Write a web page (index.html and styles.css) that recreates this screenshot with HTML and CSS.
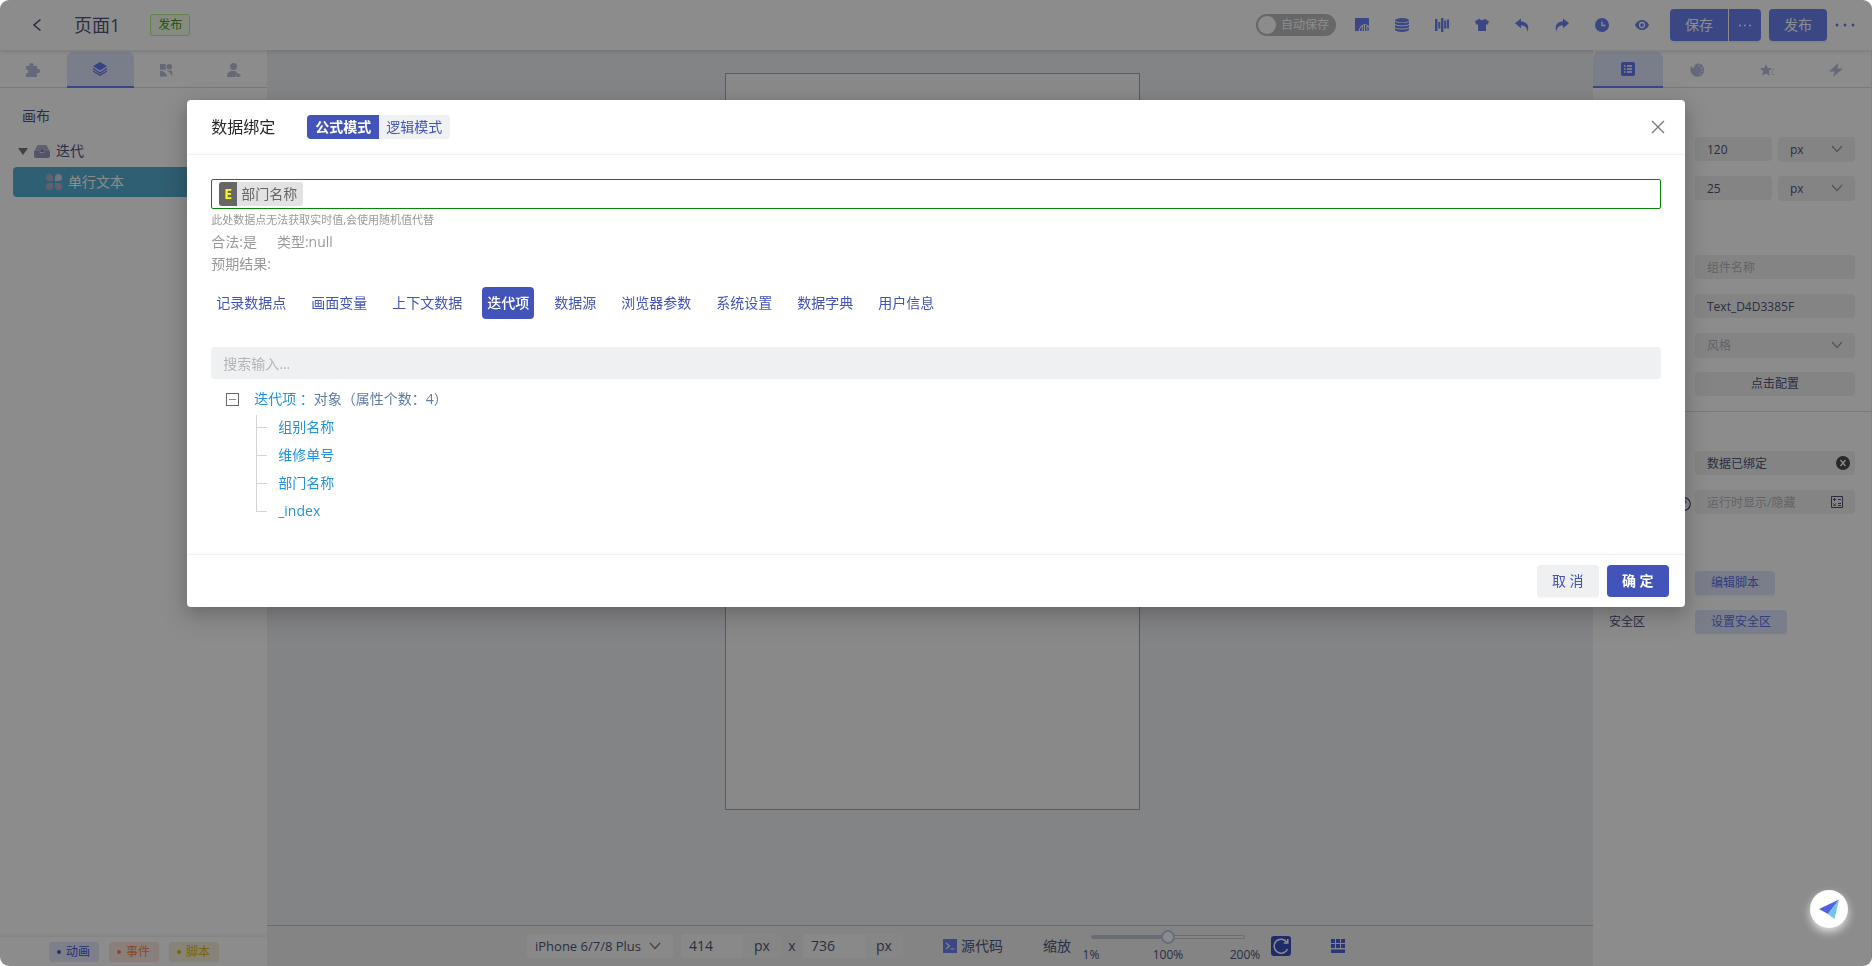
FILE: index.html
```html
<!DOCTYPE html>
<html lang="zh-CN">
<head>
<meta charset="utf-8">
<title>页面1</title>
<link rel="stylesheet" href="styles.css">
</head>
<body>
<div class="app">
  <header class="topbar">
    <button class="back" aria-label="返回"><svg width="10" height="14" viewBox="0 0 10 14"><path d="M8.500 1.500L2 7l6.500 5.500" fill="none" stroke="currentColor" stroke-width="1.600"/></svg></button>
    <h1 class="page-title">页面1</h1>
    <span class="status-tag">发布</span>
    <label class="autosave"><input type="checkbox"><span>自动保存</span></label>
    <nav class="tools">
      <button aria-label="模板"><svg viewBox="0 0 14 14"><path d="M0 0h14v8.200C10 4.500 5 6.500 3.600 13H0z"/><path d="M4.600 13C5 11 5.600 9.500 6.800 8.600V13zM7.800 13V7.800l1.200-.6V13zM10 13V7h1.400v6zM12.400 13V8.500c1 .6 1.600 1.500 1.600 2.500 0 1-.6 2-1.600 2z"/></svg></button>
      <button aria-label="数据"><svg viewBox="0 0 14 14"><ellipse cx="7" cy="2.200" rx="7" ry="2.200"/><path d="M0 3.500c2 2 12 2 14 0v2.200c-2 2-12 2-14 0zM0 6.800c2 2 12 2 14 0V9c-2 2-12 2-14 0zM0 10c2 2 12 2 14 0v1.700c-2 3-12 3-14 0z"/></svg></button>
      <button aria-label="对齐"><svg viewBox="0 0 14 14"><path d="M0 1h2.500v12H0zM3.300 4h2v6.500h-2zM6 0h2.400v14H6zM9.100 2.500h2v8h-2zM11.800 1.500H14v9h-2.200z"/></svg></button>
      <button aria-label="主题"><svg viewBox="0 0 14 14"><path d="M4.300.8c1 1.600 4.400 1.600 5.400 0L14 3.200l-1.400 3.600-1.600-.6V13H3V6.200l-1.600.6L0 3.200z"/></svg></button>
      <button aria-label="撤销"><svg viewBox="0 0 14 14"><path d="M0 5.200L6 .5v3C12 3.500 15 8 12.300 14 12.400 9.500 10 7.500 6 7.500v2.800z"/></svg></button>
      <button aria-label="重做"><svg viewBox="0 0 14 14"><path d="M14 5.200L8 .5v3C2 3.500-1 8 1.700 14 1.600 9.500 4 7.500 8 7.500v2.800z"/></svg></button>
      <button aria-label="历史"><svg viewBox="0 0 14 14"><circle cx="7" cy="7" r="7"/><path d="M7 3.500v4h3.500" class="cut"/></svg></button>
      <button aria-label="预览"><svg viewBox="0 0 14 14"><path d="M0 7c3-6.700 11-6.700 14 0-3 6.700-11 6.700-14 0z"/><circle cx="7" cy="7" r="2.500" class="cut"/></svg></button>
    </nav>
    <div class="save-group"><button class="btn-blue">保存</button><button class="btn-blue more" aria-label="更多保存"><svg width="14" height="3" viewBox="0 0 14 3"><circle cx="2" cy="1.500" r="1"/><circle cx="7" cy="1.500" r="1"/><circle cx="12" cy="1.500" r="1"/></svg></button></div>
    <button class="btn-blue publish">发布</button>
    <button class="dots" aria-label="更多"><svg width="20" height="4" viewBox="0 0 20 4"><circle cx="2" cy="2" r="1.500"/><circle cx="10" cy="2" r="1.500"/><circle cx="18" cy="2" r="1.500"/></svg></button>
  </header>

  <div class="workspace">
    <aside class="left">
      <nav class="tabs">
        <button aria-label="组件"><svg viewBox="0 0 14 14"><path d="M0 3h3.500C2.800 1 4 0 5.500 0S8 1 7.500 3H11v3c1.800-.5 3 .5 3 2s-1.200 2.500-3 2v4H0v-3.500c3 .5 3-4.500 0-4z"/></svg></button>
        <button class="active" aria-label="图层"><svg viewBox="0 0 14 14"><path d="M7 0l7 4.300L7 8.500 0 4.300z"/><path d="M0 6.500L7 11l7-4.500M0 9L7 13.300 14 9" fill="none" stroke="currentColor" stroke-width="1.300"/></svg></button>
        <button aria-label="素材"><svg viewBox="0 0 14 14"><rect x="0" y="1" width="5.700" height="5.700"/><circle cx="9.300" cy="3.800" r="2.800"/><path d="M0 7.800c4 .5 6 2.200 7.500 5.700H0zM6.500 7.800h5.700v5.700c-1-2.500-3-4.500-5.700-5.700z"/></svg></button>
        <button aria-label="用户"><svg viewBox="0 0 14 14"><circle cx="6.500" cy="3.500" r="3.500"/><path d="M0 14c0-4 2-6 5-6h3l2 2-1.500 4zM10 10l4 2-2 2H9.500z"/></svg></button>
      </nav>
      <div class="layers">
        <p class="canvas-name">画布</p>
        <div class="layer"><span class="caret"></span><svg width="16" height="14" viewBox="0 0 16 14"><path d="M3.500 1h9L16 8H0z" fill="#aeb0cf"/><path d="M0 7h5c1 3 5 3 6 0h5v5c0 1-1 2-2 2H2c-1 0-2-1-2-2z" fill="#9899bd"/><circle cx="8" cy="7" r="1.500" fill="#777aa8"/></svg><span>迭代</span></div>
        <div class="layer child"><svg width="16" height="16" viewBox="0 0 16 16"><path d="M0 3.500a3.500 3.500 0 017 0V7H3.500A3.500 3.500 0 010 3.500zM0 12.500A3.500 3.500 0 003.500 16 3.500 3.500 0 007 12.500V9H3.500A3.500 3.500 0 000 12.500zM16 12.500a3.500 3.500 0 01-7 0V9h3.500a3.500 3.500 0 013.500 3.500z" fill="#b3aed0"/><path d="M9 7V3.500A3.500 3.500 0 1112.500 7z" fill="#d8d2ec"/></svg><span>单行文本</span></div>
      </div>
      <footer class="legend"><span class="blue">动画</span><span class="orange">事件</span><span class="yellow">脚本</span></footer>
    </aside>

    <main class="center">
      <div class="stage"><div class="phone"></div></div>
      <footer class="bottombar">
        <div class="select-wrap device"><select aria-label="设备"><option>iPhone 6/7/8 Plus</option></select><svg width="12" height="8" viewBox="0 0 12 8"><path d="M1 1l5 5.500L11 1"/></svg></div>
        <label class="size"><input value="414" aria-label="宽"><span>px</span></label>
        <span class="times">x</span>
        <label class="size"><input value="736" aria-label="高"><span>px</span></label>
        <button class="source"><svg width="14" height="14" viewBox="0 0 14 14"><path d="M0 0h14v14H0z" fill="#6c82f0"/><path d="M3 4l3.500 3L3 10M7.500 10h4" fill="none" stroke="#f4f4ff" stroke-width="1.200"/></svg>源代码</button>
        <label class="zoom-label" for="zoom">缩放</label>
        <div class="zoom"><input id="zoom" type="range" min="1" max="200" value="100"><div class="marks"><span>1%</span><span>100%</span><span>200%</span></div></div>
        <button class="reset" aria-label="重置"><svg width="20" height="20" viewBox="0 0 20 20"><path d="M16 6.500A7 7 0 1016.500 13M16.800 3v4h-4" fill="none" stroke="#fff" stroke-width="1.500"/></svg></button>
        <button class="grid" aria-label="网格"><svg width="14" height="14" viewBox="0 0 14 14"><path d="M0 0h4v4H0zM5 0h4v4H5zM10 0h4v4h-4zM0 5h4v4H0zM5 5h4v4H5zM10 5h4v4h-4zM0 10.500h14V14H0z"/></svg></button>
      </footer>
    </main>

    <aside class="right">
      <nav class="tabs">
        <button class="active" aria-label="属性"><svg viewBox="0 0 14 14"><rect width="14" height="14" rx="2"/><path d="M3 4h1.500M3 7h1.500M3 10h1.500M6 4h5M6 7h5M6 10h5" class="cut"/></svg></button>
        <button aria-label="样式"><svg viewBox="0 0 14 14"><path d="M5 2c2-3 9-2 9 5s-7 8-11 5S0 4 2 3c0 3 2 3 3-1z"/><g fill="#fff"><circle cx="9" cy="2.500" r=".8"/><circle cx="11.500" cy="5" r=".8"/><circle cx="12" cy="8" r=".8"/><circle cx="10.500" cy="11" r=".8"/></g></svg></button>
        <button aria-label="事件"><svg viewBox="0 0 14 14"><path d="M6 1l1.800 4 4.400.3L8.800 8.200l1 4.500L6 10.400l-3.900 2.300 1-4.500L0 5.300 4.200 5z"/><path d="M12.500 6.500H14M11.500 9h1.500M12.500 11.500H14" stroke="currentColor"/></svg></button>
        <button aria-label="动作"><svg viewBox="0 0 14 14"><path d="M9.500 0L0 8.500h5.500L4 14l10-8.500H8.500z"/></svg></button>
      </nav>
      <div class="props">
        <section>
          <div class="row"><span class="pair"><input value="120" aria-label="宽度"><span class="select-wrap"><select aria-label="宽度单位"><option>px</option></select><svg width="12" height="8" viewBox="0 0 12 8"><path d="M1 1l5 5.500L11 1"/></svg></span></span></div>
          <div class="row"><span class="pair"><input value="25" aria-label="高度"><span class="select-wrap"><select aria-label="高度单位"><option>px</option></select><svg width="12" height="8" viewBox="0 0 12 8"><path d="M1 1l5 5.500L11 1"/></svg></span></span></div>
        </section>
        <section>
          <div class="row"><input placeholder="组件名称" aria-label="组件名称"></div>
          <div class="row"><input value="Text_D4D3385F" aria-label="组件标识"></div>
          <div class="row"><span class="select-wrap muted"><select aria-label="风格"><option>风格</option></select><svg width="12" height="8" viewBox="0 0 12 8"><path d="M1 1l5 5.500L11 1"/></svg></span></div>
          <div class="row"><button class="config">点击配置</button></div>
        </section>
        <section class="ruled">
          <div class="row"><span class="icon-field"><input value="数据已绑定" aria-label="数据"><svg class="clear" width="14" height="14" viewBox="0 0 14 14"><circle cx="7" cy="7" r="7" fill="#4a4a4a"/><path d="M4.500 4l5 6M9.500 4l-5 6" stroke="#fff" stroke-width="1.300"/></svg></span></div>
          <div class="row"><svg class="help outline" width="14" height="14" viewBox="0 0 14 14"><circle cx="7" cy="7" r="6.300" stroke-width="1.200"/><path d="M5 5c0-2.500 4-2.500 4 0 0 1.500-2 1.500-2 3M7 9.500v1"/></svg><span class="icon-field"><input placeholder="运行时显示/隐藏" aria-label="运行时显示/隐藏"><svg class="formula outline" width="12" height="12" viewBox="0 0 12 12"><path d="M.5.5h11v11H.5zM2 3.500h3M3.500 2v3M7 3.500h3M2.300 7.500l2.500 2.500M4.800 7.500L2.300 10M7 7.500h3M7 9.500h3"/></svg></span></div>
        </section>
        <section class="actions">
          <div class="row"><button class="link-btn">编辑脚本</button></div>
          <div class="row"><span class="name">安全区</span><button class="link-btn">设置安全区</button></div>
        </section>
      </div>
    </aside>
  </div>
</div>

<div class="mask">
  <div class="modal" role="dialog" aria-labelledby="modal-title">
    <header class="modal-head">
      <h2 id="modal-title">数据绑定</h2>
      <div class="modes">
        <label><input type="radio" name="mode" checked><span>公式模式</span></label>
        <label><input type="radio" name="mode"><span>逻辑模式</span></label>
      </div>
      <button class="close" aria-label="关闭"><svg width="14" height="14" viewBox="0 0 14 14"><path d="M1 1l12 12M13 1L1 13" stroke="currentColor" stroke-width="1.300"/></svg></button>
    </header>
    <div class="modal-body">
      <div class="formula-box" role="textbox" aria-label="公式"><span class="chip"><b>E</b><span>部门名称</span></span></div>
      <p class="hint">此处数据点无法获取实时值,会使用随机值代替</p>
      <p class="result"><span>合法:是</span><span>类型:null</span></p>
      <p class="result">预期结果:</p>
      <nav class="sources">
        <button>记录数据点</button><button>画面变量</button><button>上下文数据</button><button class="active">迭代项</button><button>数据源</button><button>浏览器参数</button><button>系统设置</button><button>数据字典</button><button>用户信息</button>
      </nav>
      <input class="search" placeholder="搜索输入..." aria-label="搜索">
      <div class="tree">
        <div class="root"><button class="toggle" aria-label="收起"></button><span><em>迭代项 ：</em>对象（属性个数：4）</span></div>
        <ul><li>组别名称</li><li>维修单号</li><li>部门名称</li><li>_index</li></ul>
      </div>
    </div>
    <footer class="modal-foot"><button class="cancel">取 消</button><button class="ok">确 定</button></footer>
  </div>
</div>
<button class="assistant" aria-label="助手"><svg width="20" height="20" viewBox="0 0 20 20"><path d="M0 10L20 .5 9 15z" fill="#5262e0"/><path d="M20 .5L15.500 20 9 15z" fill="#6fc6ea"/></svg></button>
</body>
</html>
```
FILE: styles.css
```css
* { box-sizing: border-box; }
html { height: 100%; background: #fff; }
body { margin: 0; height: 100%; font: 14px/22px "Open Sans", "Noto Sans CJK SC", sans-serif; color: #50547a; }
button, input, select { font: inherit; color: inherit; border: 0; padding: 0; margin: 0; background: none; outline: 0; }
button { cursor: pointer; }
h1, h2, p, ul { margin: 0; padding: 0; font-weight: 400; list-style: none; }
svg { display: block; flex: none; fill: currentColor; }
.cut { fill: none; stroke: #fff; stroke-width: 1.3px; }
.outline { fill: none; stroke: #4a4f78; }

.app { height: 100%; display: flex; flex-direction: column; overflow: hidden; border-radius: 9px; background: #fff; }
.topbar { position: relative; height: 50px; flex: none; display: flex; align-items: center; padding: 0 17px 0 32px; box-shadow: 0 1px 5px rgba(0, 0, 0, .15); }
.back { margin-right: 32px; }
.page-title { font-size: 18px; line-height: 26px; }
.status-tag { margin-left: 30px; padding: 0 7px; font-size: 12px; line-height: 20px; color: #389e0d; background: #f6ffed; border: 1px solid #b7eb8f; border-radius: 3px; }
.autosave { margin-left: auto; width: 80px; height: 22px; display: flex; align-items: center; gap: 5px; padding: 0 2px; border-radius: 11px; background: #bcbcbc; color: #fff; font-size: 12px; }
.autosave input { appearance: none; width: 18px; height: 18px; border-radius: 50%; background: #fff; }
.tools { display: flex; gap: 26px; margin: 0 21px 0 19px; color: #6c82f0; }
.tools svg, .tabs svg { width: 14px; height: 14px; }
.save-group { display: flex; gap: 1px; }
.btn-blue { height: 32px; width: 58px; background: #6c82f0; color: #fff; border-radius: 4px; box-shadow: 0 2px 0 rgba(0, 0, 0, .05); }
.save-group .btn-blue:first-child { border-radius: 4px 0 0 4px; }
.btn-blue.more { width: 32px; display: grid; place-items: center; border-radius: 0 4px 4px 0; }
.publish { margin: 0 8px; }
.dots { color: #6c82f0; }

.workspace { flex: 1; min-height: 0; display: flex; }
.left { width: 267px; display: flex; flex-direction: column; }
.tabs { height: 38px; padding-top: 2px; display: flex; border-bottom: 1px solid #dcdcdc; color: #b8bedb; }
.tabs button { flex: 1; display: grid; place-items: center; padding-top: 1px; border-radius: 6px 6px 0 0; }
.tabs .active { height: 36px; padding: 0 0 1px; background: #dfe6fb; color: #6278ee; border-bottom: 2px solid #6c82f0; }
.layers { flex: 1; padding-top: 17px; }
.canvas-name { padding-left: 22px; }
.layer { height: 30px; display: flex; align-items: center; gap: 6px; padding-left: 18px; margin-top: 9px; }
.caret { width: 10px; border: 5px solid transparent; border-top: 7px solid #777; border-bottom: 0; }
.layer.child { margin: 1px 0 0 13px; padding-left: 33px; background: #55adcf; color: #fff; border-radius: 4px 0 0 4px; }
.legend { height: 29px; display: flex; gap: 10px; padding: 5px 0 0 49px; box-shadow: 0 -1px 4px rgba(0, 0, 0, .09); }
.legend span { width: 50px; height: 20px; display: flex; align-items: center; gap: 5px; padding-left: 8px; border-radius: 4px; font-size: 12px; }
.legend span::before { content: ""; width: 4px; height: 4px; border-radius: 50%; background: currentColor; }
.blue { color: #4255dd; background: #e4e8fa; }
.orange { color: #f08a52; background: #f9e9e1; }
.yellow { color: #ddb514; background: #f5f1da; }

.center { flex: 1; min-width: 0; display: flex; flex-direction: column; background: #eff0f5; }
.stage { flex: 1; padding: 23px 0 0 4px; overflow: hidden; }
.phone { width: 415px; height: 737px; margin: 0 auto; background: #fafafc; border: 1px solid #a6a6a6; }
.bottombar { height: 41px; display: flex; align-items: center; justify-content: center; padding-left: 12px; border-top: 1px solid #bfc1c8; background: #f0f0f0; }
.select-wrap { position: relative; display: block; }
.select-wrap select { appearance: none; width: 100%; height: 24px; border-radius: 4px; }
.select-wrap svg { position: absolute; right: 12px; top: 8px; fill: none; stroke: #777; stroke-width: 1.2px; pointer-events: none; }
.device { width: 146px; margin-right: 8px; }
.device select { padding-left: 8px; background: #fafafa; font-size: 13px; }
.size { display: flex; width: 100px; height: 24px; border-radius: 4px; background: #f5f5f5; overflow: hidden; }
.size input { width: 62px; padding-left: 8px; background: #fafafa; }
.size span { flex: 1; text-align: center; line-height: 24px; }
.times { width: 22px; text-align: center; }
.source { display: flex; align-items: center; gap: 4px; margin: 0 40px; }
.zoom { position: relative; width: 154px; height: 32px; margin: 0 26px 0 20px; }
.zoom input { appearance: none; display: block; width: 100%; height: 14px; }
.zoom input::-webkit-slider-runnable-track { height: 4px; border: 1px solid #c5c5c5; border-radius: 2px; background: linear-gradient(90deg, #b9c7ef 50%, #f5f5f5 50%); }
.zoom input::-webkit-slider-thumb { appearance: none; width: 14px; height: 14px; margin-top: -6px; border: 2px solid #b9c7ef; border-radius: 50%; background: #fff; }
.marks { display: flex; justify-content: space-between; margin: 2px -20px 0; font-size: 12px; line-height: 18px; }
.marks span { width: 40px; text-align: center; }
.reset { width: 20px; height: 20px; border-radius: 3px; background: #3b4fc0; margin-right: 40px; }
.grid { color: #4a62e0; }

.right { width: 279px; border-right: 1px solid #eee; font-size: 12px; }
.props { padding: 49px 16px 0; display: flex; flex-direction: column; gap: 54px; }
.props section { display: flex; flex-direction: column; gap: 14px; }
.row { position: relative; min-height: 25px; padding-left: 86px; }
.row input, .row select, .config { display: block; width: 100%; height: 24px; padding: 0 12px; border-radius: 4px; background: #f0f1f2; }
.row .select-wrap select { height: 25px; }
.row .select-wrap svg { stroke: #999; }
input::placeholder { color: #b5b5b9; opacity: 1; }
.muted { color: #b5b5b9; }
.pair { display: grid; grid-template-columns: 1fr 1fr; gap: 6px; }
.props .ruled { margin: -40px -16px 0; padding: 39px 16px 0; border-top: 1px solid #e2e2e2; }
.props .actions { padding-top: 2px; }
.icon-field { position: relative; display: block; }
.icon-field svg { position: absolute; right: 5px; top: 5px; }
.icon-field .formula { right: 12px; top: 6px; }
.help { position: absolute; left: 68px; top: 7px; }
.link-btn { display: block; height: 24px; padding: 0 16px; border-radius: 4px; background: #dfe6fb; color: #5870e8; box-shadow: 0 2px 0 rgba(0, 0, 0, .03); }
.name { position: absolute; left: 0; top: 1px; }

.mask { position: fixed; inset: 0; padding-top: 100px; border-radius: 9px; background: rgba(0, 0, 0, .45); }
.modal { width: 80%; margin: 0 auto; background: #fff; border-radius: 4px; box-shadow: 0 6px 16px rgba(0, 0, 0, .16), 0 9px 28px 8px rgba(0, 0, 0, .1); }
.modal-head { height: 55px; display: flex; align-items: center; padding: 0 24px; border-bottom: 1px solid #f0f0f0; color: #262626; }
.modal-head h2 { font-size: 16px; line-height: 22px; }
.modes { display: flex; margin: 0 auto 0 32px; border-radius: 4px; overflow: hidden; background: #f0f1f3; color: #4254b9; }
.modes input { position: absolute; opacity: 0; }
.modes span { display: block; padding: 0 8px; line-height: 24px; }
.modes label + label span { padding-left: 7px; }
.modes :checked + span { background: #4254b9; color: #fff; font-weight: 700; }
.close { color: #777; margin-right: -4px; }
.modal-body { padding: 24px 24px 29px; }
.formula-box { height: 30px; padding: 3px 7px; border: 1px solid #078307; border-radius: 2px; display: flex; align-items: center; }
.chip { display: flex; height: 24px; line-height: 24px; background: #e2e2e2; color: #666; border-radius: 3px; overflow: hidden; }
.chip b { width: 18px; text-align: center; color: #ff0; background: #666; }
.chip span { padding: 0 6px 0 4px; }
.hint { font-size: 11px; line-height: 22px; color: #999; }
.result { display: flex; gap: 20px; color: #999; }
.sources { display: flex; gap: 15px; margin-top: 12px; color: #4254b9; }
.sources button { height: 32px; padding: 0 5px; border-radius: 4px; white-space: nowrap; }
.sources .active { background: #4254b9; color: #fff; font-weight: 500; }
.search { display: block; width: 100%; height: 32px; margin-top: 28px; padding: 0 12px; border-radius: 4px; background: #eff0f2; }
.tree { padding: 6px 0 0 15px; color: #2492dc; }
.root { display: flex; align-items: center; gap: 15px; height: 28px; color: #5f7ba6; }
.root em { font-style: normal; color: #2492dc; }
.toggle { width: 13px; height: 13px; border: 1px solid #666; display: grid; place-items: center; }
.toggle::before { content: ""; width: 7px; height: 1px; background: #888; }
.tree ul { position: relative; margin-left: 30px; }
.tree ul::before { content: ""; position: absolute; left: 0; top: 2px; bottom: 13px; border-left: 1px solid #d4d4d4; }
.tree li { height: 28px; line-height: 28px; display: flex; align-items: center; gap: 11px; }
.tree li::before { content: ""; width: 11px; height: 1px; background: #d4d4d4; }
.modal-foot { display: flex; justify-content: flex-end; gap: 8px; padding: 10px 16px; border-top: 1px solid #f0f0f0; }
.modal-foot button { width: 62px; height: 32px; border-radius: 4px; box-shadow: 0 2px 0 rgba(0, 0, 0, .02); }
.cancel { background: #eff0f2; color: #4254b9; }
.ok { background: #4254b9; color: #fff; font-weight: 700; }
.assistant { position: fixed; right: 24px; bottom: 38px; width: 38px; height: 38px; display: grid; place-items: center; border-radius: 50%; background: #fff; box-shadow: 0 4px 9px rgba(255, 255, 255, .75); }
```
